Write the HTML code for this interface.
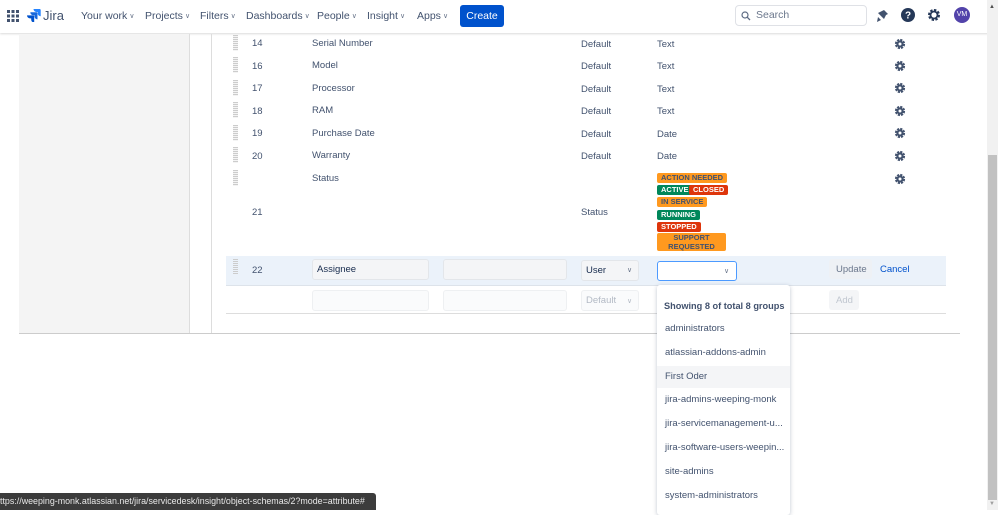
<!DOCTYPE html>
<html><head><meta charset="utf-8"><style>
*{box-sizing:border-box;margin:0;padding:0}
body{width:998px;height:510px;overflow:hidden;position:relative;background:#fff;font-family:"Liberation Sans",sans-serif;color:#172b4d}
.a{position:absolute}
.t{position:absolute;font-size:9.5px;color:#42526e;line-height:12px}
.nav{font-size:10.5px;color:#42526e;top:10px;white-space:nowrap}
.nav i{font-style:normal;font-size:7px;color:#6b778c;margin-left:2px;position:relative;top:-1px}
.h{position:absolute;width:5px;height:16px;left:233px;background:repeating-linear-gradient(#ccc 0 1px,#f4f4f4 1px 2px)}
.loz{position:absolute;left:657px;font-size:7.5px;font-weight:bold;height:10px;line-height:10px;padding:0 4px;border-radius:2px;text-transform:uppercase}
.o{background:#ff991f;color:#42526e}.g{background:#00875a;color:#fff}.r{background:#de350b;color:#fff}
.gear{position:absolute;left:894px;width:12px;height:12px}
.in{position:absolute;background:#f4f5f7;border:1px solid #e3e6ea;border-radius:3px;height:21px}
.it{position:absolute;left:665px;font-size:9.5px;color:#42526e}
.chev{position:absolute;font-size:7px;color:#6b778c}
</style></head><body>
<div class="a" style="left:0;top:0;width:998px;height:33px;background:#fff;box-shadow:0 1px 2px rgba(0,0,0,.15)"></div>
<svg class="a" style="left:7px;top:10px" width="12" height="12"><g fill="#42526e"><rect x="0" y="0" width="3" height="3"/><rect x="4.5" y="0" width="3" height="3"/><rect x="9" y="0" width="3" height="3"/><rect x="0" y="4.5" width="3" height="3"/><rect x="4.5" y="4.5" width="3" height="3"/><rect x="9" y="4.5" width="3" height="3"/><rect x="0" y="9" width="3" height="3"/><rect x="4.5" y="9" width="3" height="3"/><rect x="9" y="9" width="3" height="3"/></g></svg>
<svg class="a" style="left:27px;top:8px" width="14" height="14"><path d="M13 1H6.5a3 3 0 0 0 3 3h1.2v1.2a3 3 0 0 0 3 3V1.7z" fill="#2684ff"/><path d="M9.8 4.2H3.3a3 3 0 0 0 3 3h1.2v1.2a3 3 0 0 0 3 3V4.9z" fill="#1868db"/><path d="M6.5 7.4H0a3 3 0 0 0 3 3h1.2v1.2a3 3 0 0 0 3 3V8.1z" fill="#0052cc"/></svg>
<div class="a" style="left:43px;top:8px;font-size:13px;color:#42526e">Jira</div>
<div class="a nav" style="left:81px">Your work<i>∨</i></div>
<div class="a nav" style="left:145px">Projects<i>∨</i></div>
<div class="a nav" style="left:200px">Filters<i>∨</i></div>
<div class="a nav" style="left:246px">Dashboards<i>∨</i></div>
<div class="a nav" style="left:317px">People<i>∨</i></div>
<div class="a nav" style="left:367px">Insight<i>∨</i></div>
<div class="a nav" style="left:417px">Apps<i>∨</i></div>
<div class="a" style="left:460px;top:5px;width:44px;height:22px;background:#0052cc;border-radius:3px;color:#fff;font-size:10.5px;line-height:22px;text-align:center">Create</div>
<div class="a" style="left:735px;top:5px;width:132px;height:21px;border:1px solid #dfe1e6;border-radius:4px;background:#fff"></div>
<svg class="a" style="left:741px;top:11px" width="10" height="10"><circle cx="4" cy="4" r="3" stroke="#5e6c84" stroke-width="1.2" fill="none"/><path d="M6.2 6.2L9 9" stroke="#5e6c84" stroke-width="1.3"/></svg>
<div class="a" style="left:756px;top:9px;font-size:10.5px;color:#6b778c">Search</div>
<svg class="a" style="left:875px;top:9px" width="14" height="14"><path d="M9 1l4 4-2 1-2 4-6-6 4-2z M3 8l3 3-4 2z" fill="#42526e"/></svg>
<svg class="a" style="left:901px;top:8px" width="14" height="14"><circle cx="7" cy="7" r="7" fill="#253858"/><text x="7" y="10.5" font-size="10" font-weight="bold" fill="#fff" text-anchor="middle" font-family="Liberation Sans">?</text></svg>
<svg class="a" style="left:927px;top:8px" width="14" height="14"><circle cx="7" cy="7" r="4.5" fill="none" stroke="#253858" stroke-width="3" stroke-dasharray="2.2 1.3"/><circle cx="7" cy="7" r="3.5" fill="none" stroke="#253858" stroke-width="1.8"/></svg>
<div class="a" style="left:954px;top:7px;width:16px;height:16px;border-radius:50%;background:#5243aa;color:#fff;font-size:7px;line-height:16px;text-align:center">VM</div>
<div class="a" style="left:19px;top:34px;width:170px;height:299px;background:#f4f4f4"></div>
<div class="a" style="left:189px;top:34px;width:1px;height:299px;background:#ddd"></div>
<div class="a" style="left:211px;top:34px;width:1px;height:299px;background:#ddd"></div>
<div class="a" style="left:19px;top:333px;width:941px;height:1px;background:#ccc"></div>
<div class="h" style="top:35px"></div><div class="t" style="left:252px;top:38px">14</div><div class="t" style="left:312px;top:38px">Serial Number</div><div class="t" style="left:581px;top:39px">Default</div><div class="t" style="left:657px;top:39px">Text</div>
<div class="h" style="top:57px"></div><div class="t" style="left:252px;top:61px">16</div><div class="t" style="left:312px;top:60px">Model</div><div class="t" style="left:581px;top:61px">Default</div><div class="t" style="left:657px;top:61px">Text</div>
<div class="h" style="top:80px"></div><div class="t" style="left:252px;top:83px">17</div><div class="t" style="left:312px;top:83px">Processor</div><div class="t" style="left:581px;top:84px">Default</div><div class="t" style="left:657px;top:84px">Text</div>
<div class="h" style="top:102px"></div><div class="t" style="left:252px;top:106px">18</div><div class="t" style="left:312px;top:105px">RAM</div><div class="t" style="left:581px;top:106px">Default</div><div class="t" style="left:657px;top:106px">Text</div>
<div class="h" style="top:125px"></div><div class="t" style="left:252px;top:128px">19</div><div class="t" style="left:312px;top:128px">Purchase Date</div><div class="t" style="left:581px;top:129px">Default</div><div class="t" style="left:657px;top:129px">Date</div>
<div class="h" style="top:147px"></div><div class="t" style="left:252px;top:151px">20</div><div class="t" style="left:312px;top:150px">Warranty</div><div class="t" style="left:581px;top:151px">Default</div><div class="t" style="left:657px;top:151px">Date</div>
<div class="h" style="top:170px"></div><div class="t" style="left:312px;top:173px">Status</div>
<div class="t" style="left:252px;top:207px">21</div><div class="t" style="left:581px;top:207px">Status</div>
<svg width="0" height="0" style="position:absolute"><defs><g id="gr"><circle cx="6" cy="6" r="3.8" fill="none" stroke="#42526e" stroke-width="2.6" stroke-dasharray="2 1"/><circle cx="6" cy="6" r="3.6" fill="#42526e"/><circle cx="6" cy="6" r="1.5" fill="#fff"/></g></defs></svg>
<svg class="gear" style="top:38px"><use href="#gr"/></svg>
<svg class="gear" style="top:60px"><use href="#gr"/></svg>
<svg class="gear" style="top:82px"><use href="#gr"/></svg>
<svg class="gear" style="top:105px"><use href="#gr"/></svg>
<svg class="gear" style="top:127px"><use href="#gr"/></svg>
<svg class="gear" style="top:150px"><use href="#gr"/></svg>
<svg class="gear" style="top:173px"><use href="#gr"/></svg>
<div class="loz o" style="top:173px">Action needed</div>
<div class="loz g" style="top:185px">Active</div>
<div class="loz r" style="top:185px;left:689px">Closed</div>
<div class="loz o" style="top:197px">In service</div>
<div class="loz g" style="top:210px">Running</div>
<div class="loz r" style="top:222px">Stopped</div>
<div class="loz o" style="top:233px;width:69px;height:18px;line-height:9px;text-align:center">Support requested</div>
<div class="a" style="left:226px;top:256px;width:720px;height:30px;background:#ebf2fa;border-bottom:1px solid #dde3ea"></div>
<div class="h" style="top:259px;background:repeating-linear-gradient(#ccc 0 1px,#ebf2fa 1px 2px)"></div>
<div class="t" style="left:252px;top:265px">22</div>
<div class="in" style="left:312px;top:259px;width:117px"></div><div class="t" style="left:317px;top:264px;color:#172b4d">Assignee</div>
<div class="in" style="left:443px;top:259px;width:124px"></div>
<div class="in" style="left:581px;top:260px;width:58px"></div><div class="t" style="left:586px;top:265px;color:#172b4d">User</div><div class="chev" style="left:627px;top:266px">∨</div>
<div class="a" style="left:657px;top:261px;width:80px;height:20px;border:1px solid #4c9aff;border-radius:3px;background:#fff"></div><div class="chev" style="left:724px;top:267px">∨</div>
<div class="a" style="left:829px;top:259px;width:43px;height:20px;background:#eef1f5;border-radius:3px"></div><div class="t" style="left:836px;top:264px;color:#6b778c">Update</div>
<div class="t" style="left:880px;top:264px;color:#0052cc">Cancel</div>
<div class="in" style="left:312px;top:290px;width:117px;background:#fafbfc;border-color:#eef0f2"></div>
<div class="in" style="left:443px;top:290px;width:124px;background:#fafbfc;border-color:#eef0f2"></div>
<div class="in" style="left:581px;top:290px;width:58px;background:#fafbfc;border-color:#eef0f2"></div><div class="t" style="left:586px;top:295px;color:#b3bac5">Default</div><div class="chev" style="left:627px;top:297px;color:#b3bac5">∨</div>
<div class="a" style="left:829px;top:290px;width:30px;height:20px;background:#f4f5f7;border-radius:3px"></div><div class="t" style="left:836px;top:295px;color:#c1c7d0">Add</div>
<div class="a" style="left:226px;top:313px;width:720px;height:1px;background:#ddd"></div>
<div class="a" style="left:657px;top:285px;width:133px;height:230px;background:#fff;box-shadow:0 1px 4px rgba(9,30,66,.25);border-radius:3px"></div>
<div class="a" style="left:657px;top:366px;width:133px;height:22px;background:#f4f5f7"></div>
<div class="it" style="left:664px;top:301px;font-weight:bold;color:#42526e;font-size:9.2px">Showing 8 of total 8 groups</div>
<div class="it" style="top:323px">administrators</div>
<div class="it" style="top:347px">atlassian-addons-admin</div>
<div class="it" style="top:371px">First Oder</div>
<div class="it" style="top:394px">jira-admins-weeping-monk</div>
<div class="it" style="top:418px">jira-servicemanagement-u...</div>
<div class="it" style="top:442px">jira-software-users-weepin...</div>
<div class="it" style="top:466px">site-admins</div>
<div class="it" style="top:490px">system-administrators</div>
<div class="a" style="left:987px;top:0;width:11px;height:510px;background:#f1f1f1"></div>
<div class="a" style="left:988px;top:155px;width:9px;height:345px;background:#c1c1c1"></div>
<div class="a" style="left:989px;top:4px;font-size:6px;color:#505050">▲</div>
<div class="a" style="left:989px;top:501px;font-size:6px;color:#a0a0a0">▼</div>
<div class="a" style="left:0;top:493px;width:376px;height:17px;background:#3c3c3c;border-radius:0 3px 0 0;color:#e8e8e8;font-size:8.9px;line-height:17px;white-space:nowrap;overflow:hidden">ttps://weeping-monk.atlassian.net/jira/servicedesk/insight/object-schemas/2?mode=attribute#</div>
</body></html>
